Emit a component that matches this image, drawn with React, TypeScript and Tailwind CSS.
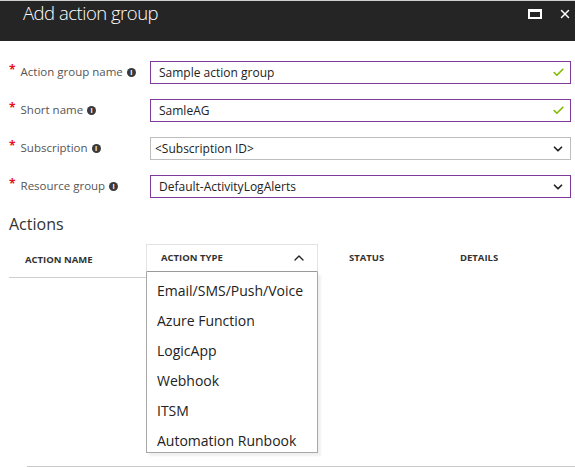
import { ChevronDown, ChevronUp, Check, X } from "lucide-react";

const FONT = { fontFamily: '"Open Sans", "Noto Sans", sans-serif' };

function InfoDot() {
  return (
    <span className="ml-[4px] inline-flex h-[9px] w-[9px] items-center justify-center rounded-full bg-[#3a3a3a] text-[7px] font-bold leading-none text-white">
      i
    </span>
  );
}

interface FieldProps {
  label: string;
  value: string;
  kind: "check" | "select";
  focused?: boolean;
}

function Field({ label, value, kind, focused }: FieldProps) {
  return (
    <div className="flex h-[23px] items-center">
      <div className="-mt-[1px] flex w-[150px] items-center pl-[9px] text-[11.5px] text-[#555]">
        <span className="mr-[5px] -mt-[4px] text-[12px] font-bold text-[#e81123]">*</span>
        <span>{label}</span>
        <InfoDot />
      </div>
      <div
        className={`mr-[4px] flex h-[23px] flex-1 items-center justify-between border pr-[5px] text-[12px] text-[#222] ${
          focused ? "border-[#7e3a98] pl-[8px]" : "border-[#bdbdbd] pl-[4px]"
        }`}
      >
        <span>{value}</span>
        {kind === "check" ? (
          <Check size={13} strokeWidth={3} className="text-[#7fba00]" />
        ) : (
          <ChevronDown size={14} strokeWidth={3} className="text-[#222]" />
        )}
      </div>
    </div>
  );
}

const actionTypes = [
  "Email/SMS/Push/Voice",
  "Azure Function",
  "LogicApp",
  "Webhook",
  "ITSM",
  "Automation Runbook",
];

export default function App() {
  return (
    <div className="relative h-[467px] w-[575px] overflow-hidden bg-white" style={FONT}>
      {/* Blade header */}
      <div className="flex h-[41px] items-start justify-between border-t border-[#cfcfcf] bg-[#252525] pl-[23px] pr-[3px]">
        <h1 className="-mt-[2px] text-[18.5px] font-light tracking-[-0.5px] text-white">Add action group</h1>
        <div className="mt-[6px] flex items-center gap-[16px]">
          <span className="block h-[10px] w-[14px] border-2 border-t-[3px] border-white" />
          <X size={14} strokeWidth={2.5} className="text-white" />
        </div>
      </div>

      {/* Form */}
      <div className="mt-[20px] flex flex-col gap-[15px]">
        <Field label="Action group name" value="Sample action group" kind="check" focused />
        <Field label="Short name" value="SamleAG" kind="check" focused />
        <Field label="Subscription" value="<Subscription ID>" kind="select" />
        <Field label="Resource group" value="Default-ActivityLogAlerts" kind="select" focused />
      </div>

      <h2 className="mt-[16px] pl-[9px] text-[16px] leading-[20px] text-[#333]">Actions</h2>

      {/* Actions table */}
      <div className="relative mt-[10px] ml-[9px] flex h-[34px] items-start text-[9.5px] font-bold uppercase text-[#333]">
        <div className="flex h-[34px] w-[137px] items-center border-b border-[#cfcfcf] pl-[16px]">
          Action name
        </div>
        <div className="relative w-[172px]">
          <div className="flex h-[28px] items-center justify-between border border-b-[#9a9a9a] border-[#e3e3e3] pl-[14px] pr-[10px]">
            <span>Action type</span>
            <ChevronUp size={16} strokeWidth={2} className="text-[#222]" />
          </div>
          <div className="absolute left-0 top-[28px] z-10 h-[181px] w-[172px] border border-t-0 border-[#a8a8a8] bg-white pt-[3px] shadow-[3px_3px_2px_rgba(0,0,0,0.06)]">
            {actionTypes.map((t) => (
              <div
                key={t}
                className="flex h-[30px] items-center pl-[10px] text-[14px] font-normal normal-case text-[#222]"
              >
                {t}
              </div>
            ))}
          </div>
        </div>
        <div className="flex h-[28px] w-[142px] items-center pl-[31px]">Status</div>
        <div className="flex h-[28px] items-center">Details</div>
      </div>

      <div className="absolute bottom-0 left-[27px] right-0 border-b border-[#c8c8c8]" />
    </div>
  );
}
